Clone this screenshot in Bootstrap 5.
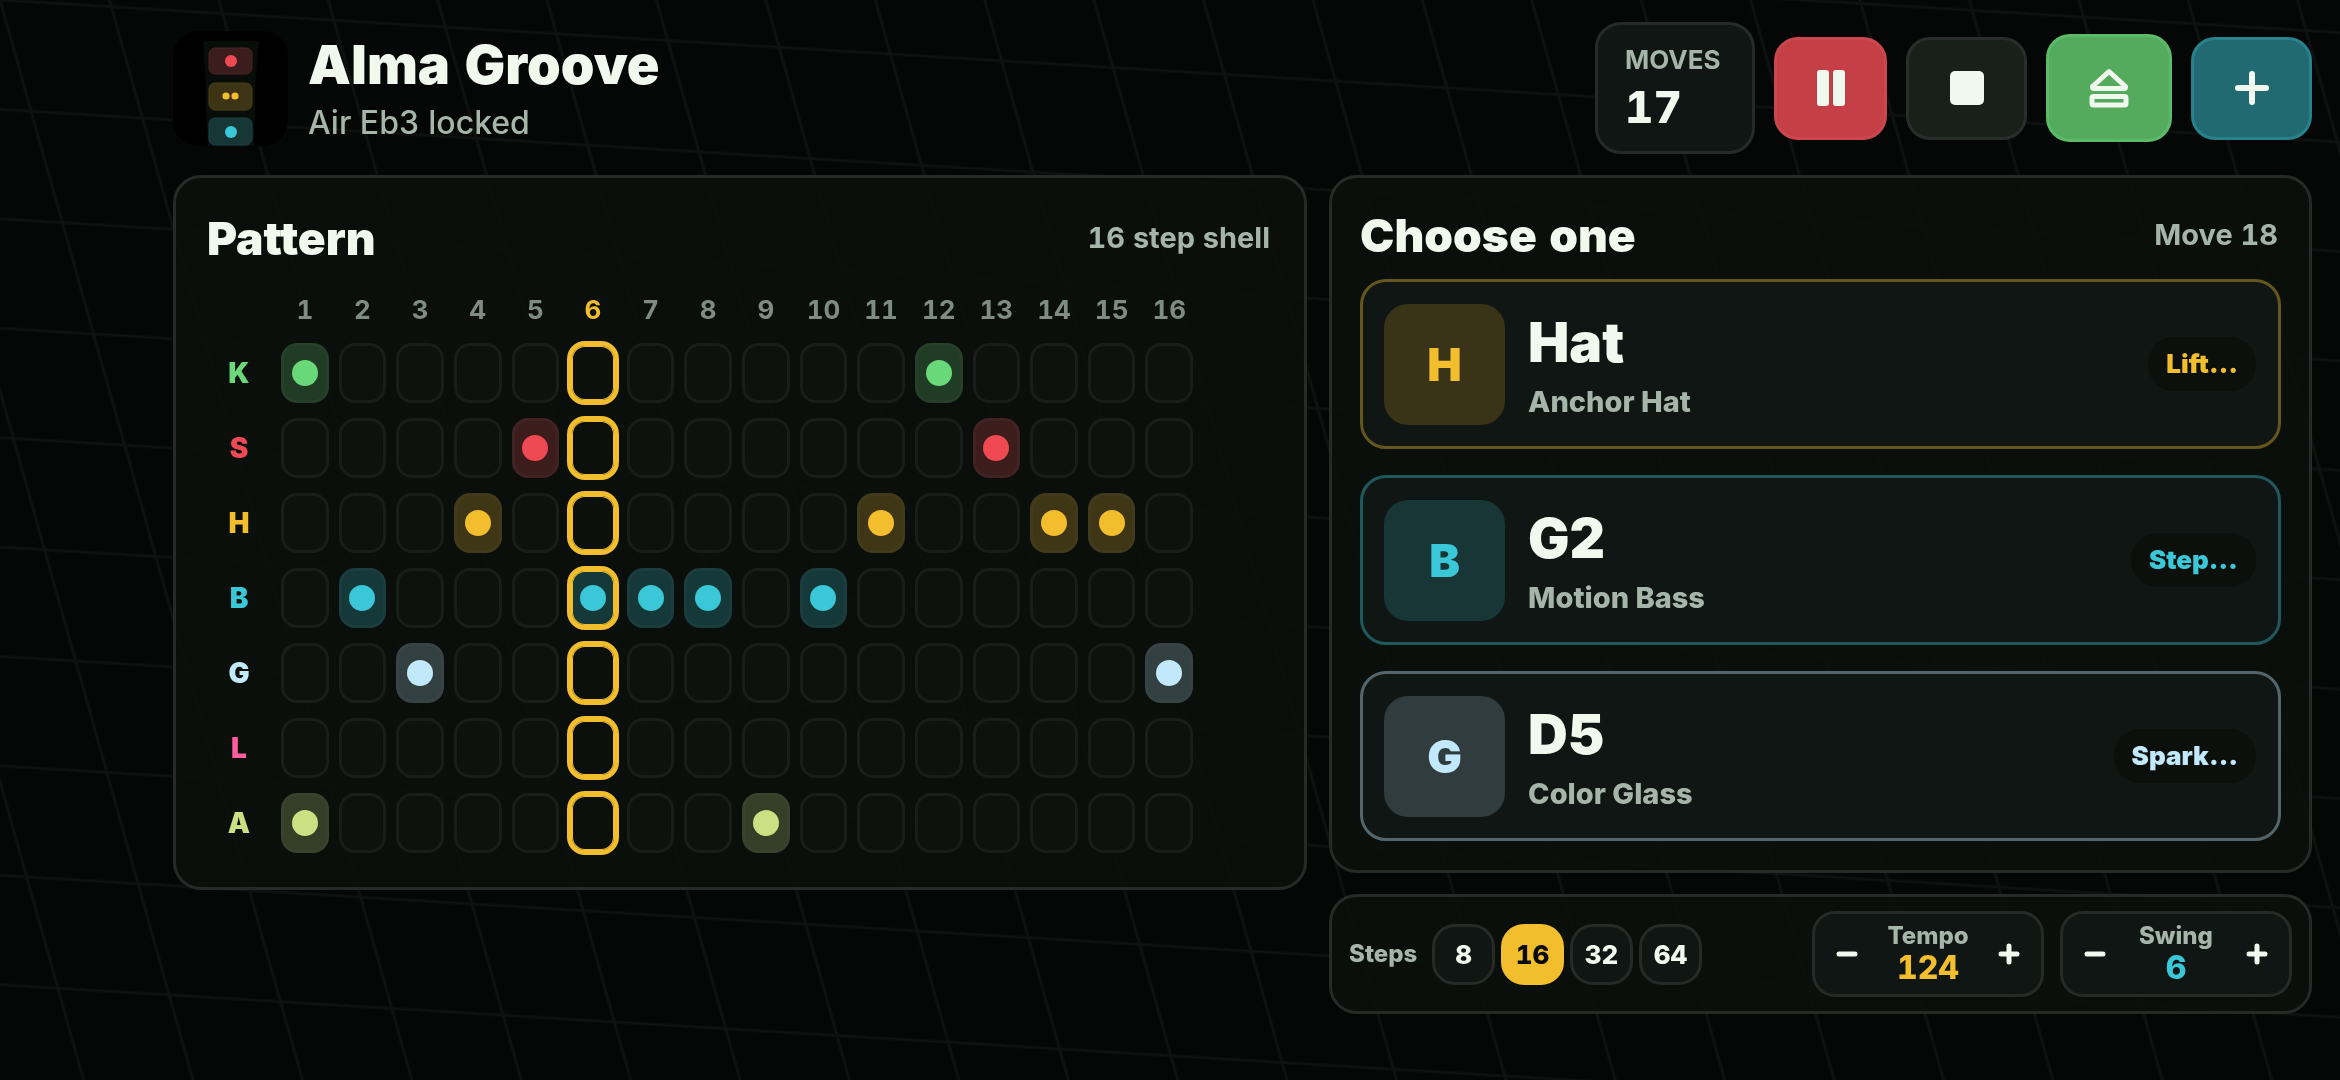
<!DOCTYPE html>
<html lang="en" data-bs-theme="dark">
<head>
<meta charset="utf-8">
<meta name="viewport" content="width=device-width, initial-scale=1">
<title>Alma Groove</title>
<link href="https://cdn.jsdelivr.net/npm/bootstrap@5.3.0/dist/css/bootstrap.min.css" rel="stylesheet">
<style>
:root{
  --ink:#f1f8ee; --soft:#a5b5aa; --dim:#7f8c83; --line:#262b28;
  --kick:#69d878; --snare:#ef4953; --hat:#f2be2e; --bass:#3ac7d7; --glass:#c2e8fb; --lead:#ff5d9e; --air:#cae082;
}
body{background:#050707;color:var(--ink);font-family:Inter,"Liberation Sans",sans-serif;font-variant-numeric:tabular-nums;min-height:100vh}
.backdrop{position:fixed;inset:0;width:100%;height:100%;z-index:-1}
.shell{padding:22px 28px 22px 173px}
.topbar{margin-bottom:21px}
.logo{width:115px;height:115px;flex:none}
.app-name{font-size:54px;line-height:64px;font-weight:900;margin:0;color:var(--ink)}
.app-sub{font-size:32px;line-height:40px;font-weight:500;color:var(--soft);margin:6px 0 0}
.moves{min-width:160px;height:132px;border:3px solid var(--line);border-radius:26px;background:#101613;padding:0 27px}
.moves dt{font-size:26px;line-height:30px;font-weight:700;color:var(--soft)}
.moves dd{font-size:44px;line-height:48px;font-weight:800;margin:8px 0 0}
.tool{width:121px;height:103px;border:3px solid;border-radius:24px;padding:0;color:var(--ink)}
.tool.narrow{width:113px}
.tool.wide{width:126px;height:108px}
.tool-red{background:#c43f46;border-color:#cb464d}
.tool-dark{background:#191f19;border-color:#2a2e2b}
.tool-green{background:#54ab5d;border-color:#5bbb66}
.tool-teal{background:#216a72;border-color:#27828c}
.board{display:grid;grid-template-columns:15fr 13fr;gap:22px;align-items:start}
.panel{background:rgba(11,16,12,.92);border:3px solid var(--line);border-radius:28px}
.pattern{padding:32px 34px 34px 31px}
.choose{padding:29px 28px 29px}
.choose .head{padding-right:3px}
.panel h2{font-size:46px;line-height:56px;font-weight:900;margin:0;color:var(--ink)}
.panel .aside{font-size:29px;line-height:36px;font-weight:700;color:var(--soft)}
.seq{display:grid;grid-template-columns:64px repeat(16,1fr);column-gap:10px;row-gap:15px;margin-top:26px;padding-right:77px}
.seq .num{font-size:26px;line-height:36px;font-weight:700;color:var(--dim);text-align:center}
.seq .num.now{color:var(--hat)}
.seq .lane{font-size:28px;line-height:60px;font-weight:900;text-align:center;color:var(--c)}
.pad{height:60px;padding:0;border:3px solid #191e1b;border-radius:16px;background:#0d120f;display:grid;place-items:center}
.pad.on{background:color-mix(in srgb,var(--c) 22%,#0b100d);border-color:color-mix(in srgb,var(--c) 20%,#151a17)}
.pad.on::before{content:"";width:26px;height:26px;border-radius:50%;background:var(--c)}
.pad.now{background-color:#0b100d;border-color:var(--hat);box-shadow:0 0 0 2px var(--hat),inset 0 0 0 1px var(--hat)}
.pad.now.on{background-color:color-mix(in srgb,var(--c) 22%,#0b100d)}
.K{--c:var(--kick)}.S{--c:var(--snare)}.H{--c:var(--hat)}.B{--c:var(--bass)}.G{--c:var(--glass)}.L{--c:var(--lead)}.A{--c:var(--air)}
.choices{margin-top:16px;gap:26px}
.choice{height:170px;padding:0 22px 0 21px;border:3px solid color-mix(in srgb,var(--c) 38%,#101613);border-radius:26px;background:#101613;color:var(--ink);gap:23px}
.choice .tile{width:121px;height:121px;flex:none;border-radius:24px;font-size:46px;font-weight:900;color:var(--c);background:color-mix(in srgb,var(--c) 18%,#101613)}
.choice .name{font-size:55px;line-height:66px;font-weight:900}
.choice .role{font-size:29px;line-height:36px;font-weight:800;color:var(--soft);margin-top:9px}
.choice .tag{font-size:26px;line-height:54px;font-weight:900;color:var(--c);background:#0b100d;border-radius:26px;padding:0 18px}
.transport{padding:14px 17px}
.steps{gap:6px}
.steps .steps-label{font-size:24px;line-height:30px;font-weight:800;color:var(--soft);min-width:77px}
.steps .btn{width:63px;height:61px;padding:0;border:3px solid var(--line);border-radius:23px;background:#101613;color:var(--ink);font-size:26px;line-height:55px;font-weight:800}
.steps .btn-check:checked + .btn{background:var(--hat);border-color:var(--hat);color:#080b08}
.stepper{width:232px;height:86px;border:3px solid var(--line);border-radius:23px;background:#101613;padding:0 10px}
.stepper .btn{width:44px;height:60px;padding:0;border:0;color:var(--ink)}
.stepper .cap{font-size:24px;line-height:28px;font-weight:800;color:var(--soft)}
.stepper output{font-size:32px;line-height:36px;font-weight:800;color:var(--c)}
svg{display:block}
</style>
<script src="https://cdn.jsdelivr.net/npm/bootstrap@5.3.0/dist/js/bootstrap.bundle.min.js"></script>
</head>
<body>
<svg class="backdrop" aria-hidden="true">
  <defs>
    <pattern id="mesh" width="111.3" height="111.3" patternUnits="userSpaceOnUse" patternTransform="matrix(1 .0607 .28 1 0 0)">
      <path d="M0 0H111.3M0 111.3H111.3M0 0V111.3M111.3 0V111.3" stroke="#0f1211" stroke-width="3" fill="none"/>
    </pattern>
  </defs>
  <rect width="100%" height="100%" fill="url(#mesh)"/>
</svg>

<div class="shell">
  <header class="topbar d-flex align-items-center justify-content-between">
    <div class="d-flex align-items-center">
      <svg class="logo" viewBox="0 0 115 115" role="img" aria-label="Alma Groove logo">
        <defs><clipPath id="round"><rect width="115" height="115" rx="25"/></clipPath></defs>
        <g clip-path="url(#round)">
          <rect width="115" height="115" fill="#000"/>
          <path d="M30 10H86L84 28 82 60 82 84 81 115H35L33 80 33 50 31 30Z" fill="#080d0a"/>
          <rect x="36" y="17" width="43" height="26" rx="6" fill="#3c1d1e" stroke="#4a2526"/>
          <rect x="36" y="52" width="43" height="27" rx="6" fill="#3d3415" stroke="#4a4019"/>
          <rect x="36" y="87" width="43" height="27" rx="6" fill="#173737" stroke="#1d4444"/>
          <circle cx="58" cy="30" r="6" fill="#ef4953"/>
          <circle cx="53" cy="65" r="3.6" fill="#f2be2e"/><circle cx="62" cy="65" r="3.6" fill="#f2be2e"/>
          <circle cx="58" cy="101" r="6" fill="#3ac7d7"/>
        </g>
      </svg>
      <div class="ms-3 ps-1">
        <h1 class="app-name">Alma Groove</h1>
        <p class="app-sub">Air Eb3 locked</p>
      </div>
    </div>
    <div class="d-flex align-items-center" style="gap:19px">
      <dl class="moves d-flex flex-column justify-content-center mb-0">
        <dt>MOVES</dt>
        <dd>17</dd>
      </dl>
      <button type="button" class="btn tool narrow tool-red d-grid" aria-label="Pause"><svg class="m-auto" width="28" height="36" fill="currentColor"><rect width="12" height="36" rx="3"/><rect x="16" width="12" height="36" rx="3"/></svg></button>
      <button type="button" class="btn tool tool-dark d-grid" aria-label="Stop"><svg class="m-auto" width="34" height="34" fill="currentColor"><rect width="34" height="34" rx="5"/></svg></button>
      <button type="button" class="btn tool wide tool-green d-grid" aria-label="Eject"><svg class="m-auto" width="40" height="40" fill="none" stroke="currentColor" stroke-width="5" stroke-linejoin="round"><path d="M20 3.500 L36.500 18.500 Q37 20.500 35 20.500 H5 Q3 20.500 3.500 18.500Z"/><rect x="3" y="28.500" width="34" height="8.500" rx="1.500"/></svg></button>
      <button type="button" class="btn tool tool-teal d-grid" aria-label="Add"><svg class="m-auto" width="34" height="34" fill="none" stroke="currentColor" stroke-width="6" stroke-linecap="round"><path d="M17 3V31M3 17H31"/></svg></button>
    </div>
  </header>

  <main class="board">
    <section class="panel pattern" aria-labelledby="pattern-title">
      <div class="d-flex align-items-center justify-content-between">
        <h2 id="pattern-title">Pattern</h2>
        <span class="aside">16 step shell</span>
      </div>
      <div class="seq" id="seq"></div>
    </section>

    <div class="d-flex flex-column" style="gap:21px">
      <section class="panel choose" aria-labelledby="choose-title">
        <div class="head d-flex align-items-center justify-content-between">
          <h2 id="choose-title">Choose one</h2>
          <span class="aside">Move 18</span>
        </div>
        <div class="choices d-flex flex-column">
          <button type="button" class="btn choice H d-flex align-items-center text-start">
            <span class="tile d-flex align-items-center justify-content-center">H</span>
            <span class="flex-grow-1"><span class="name d-block">Hat</span><span class="role d-block">Anchor Hat</span></span>
            <span class="tag">Lift…</span>
          </button>
          <button type="button" class="btn choice B d-flex align-items-center text-start">
            <span class="tile d-flex align-items-center justify-content-center">B</span>
            <span class="flex-grow-1"><span class="name d-block">G2</span><span class="role d-block">Motion Bass</span></span>
            <span class="tag">Step…</span>
          </button>
          <button type="button" class="btn choice G d-flex align-items-center text-start">
            <span class="tile d-flex align-items-center justify-content-center">G</span>
            <span class="flex-grow-1"><span class="name d-block">D5</span><span class="role d-block">Color Glass</span></span>
            <span class="tag">Spark…</span>
          </button>
        </div>
      </section>

      <section class="panel transport d-flex align-items-center justify-content-between" aria-label="Transport">
        <div class="steps d-flex align-items-center" role="radiogroup" aria-labelledby="steps-label">
          <span class="steps-label" id="steps-label">Steps</span>
          <input class="btn-check" type="radio" name="steps" id="s8"><label class="btn" for="s8">8</label>
          <input class="btn-check" type="radio" name="steps" id="s16" checked><label class="btn" for="s16">16</label>
          <input class="btn-check" type="radio" name="steps" id="s32"><label class="btn" for="s32">32</label>
          <input class="btn-check" type="radio" name="steps" id="s64"><label class="btn" for="s64">64</label>
        </div>
        <div class="d-flex gap-3">
          <div class="stepper H d-flex align-items-center justify-content-between">
            <button type="button" class="btn d-grid" aria-label="Slower"><svg class="m-auto" width="22" height="22" stroke="currentColor" stroke-width="5" stroke-linecap="round"><path d="M3 11H19"/></svg></button>
            <div class="d-flex flex-column align-items-center"><span class="cap">Tempo</span><output>124</output></div>
            <button type="button" class="btn d-grid" aria-label="Faster"><svg class="m-auto" width="22" height="22" stroke="currentColor" stroke-width="5" stroke-linecap="round"><path d="M3 11H19M11 3V19"/></svg></button>
          </div>
          <div class="stepper B d-flex align-items-center justify-content-between">
            <button type="button" class="btn d-grid" aria-label="Less swing"><svg class="m-auto" width="22" height="22" stroke="currentColor" stroke-width="5" stroke-linecap="round"><path d="M3 11H19"/></svg></button>
            <div class="d-flex flex-column align-items-center"><span class="cap">Swing</span><output>6</output></div>
            <button type="button" class="btn d-grid" aria-label="More swing"><svg class="m-auto" width="22" height="22" stroke="currentColor" stroke-width="5" stroke-linecap="round"><path d="M3 11H19M11 3V19"/></svg></button>
          </div>
        </div>
      </section>
    </div>
  </main>
</div>

<script>
// Lane letter -> steps that hold a hit
const lanes = {K:[1,12], S:[5,13], H:[4,11,14,15], B:[2,6,7,8,10], G:[3,16], L:[], A:[1,9]};
const playhead = 6, count = 16;
let html = '<span></span>';
for (let i = 1; i <= count; i++) html += `<span class="num${i === playhead ? ' now' : ''}">${i}</span>`;
for (const [lane, hits] of Object.entries(lanes)) {
  html += `<span class="lane ${lane}">${lane}</span>`;
  for (let i = 1; i <= count; i++) {
    const on = hits.includes(i);
    html += `<button type="button" class="pad ${lane}${on ? ' on' : ''}${i === playhead ? ' now' : ''}" aria-pressed="${on}" aria-label="${lane} step ${i}"></button>`;
  }
}
document.getElementById('seq').innerHTML = html;
</script>
</body>
</html>
